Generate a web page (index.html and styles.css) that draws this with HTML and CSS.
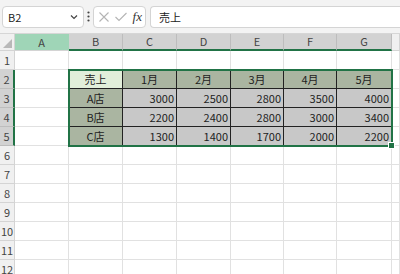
FILE: index.html
```html
<!DOCTYPE html>
<html lang="ja">
<head>
    <meta charset="UTF-8">
    <title>Sheet</title>
    <link rel="stylesheet" href="styles.css">
</head>
<body>
    <div class="toolbar">
        <div class="namebox">
            <span>B2</span>
            <svg width="10" height="10" viewBox="0 0 10 10"><path d="M2 3.5 L5 6.5 L8 3.5" fill="none" stroke="#444" stroke-width="1.2"/></svg>
        </div>
        <div class="dots">
            <svg width="3" height="11" viewBox="0 0 3 11"><circle cx="1.5" cy="1.5" r="1.1" fill="#444"/><circle cx="1.5" cy="5.5" r="1.1" fill="#444"/><circle cx="1.5" cy="9.5" r="1.1" fill="#444"/></svg>
        </div>
        <div class="fxbox">
            <svg width="12" height="12" viewBox="0 0 12 12"><path d="M1.5 1.5 L10.5 10.5 M10.5 1.5 L1.5 10.5" stroke="#b4b4b4" stroke-width="1.1"/></svg>
            <svg width="14" height="12" viewBox="0 0 14 12"><path d="M1.5 6 L5 9.5 L12.5 2" fill="none" stroke="#b4b4b4" stroke-width="1.1"/></svg>
            <span class="fx">fx</span>
        </div>
        <div class="formula">売上</div>
    </div>

    <div class="sheet">
        <div class="corner"><span class="tri"></span></div>
        <div class="colhead hover">A</div>
        <div class="colhead sel">B</div>
        <div class="colhead sel">C</div>
        <div class="colhead sel">D</div>
        <div class="colhead sel">E</div>
        <div class="colhead sel">F</div>
        <div class="colhead sel">G</div>
        <div class="colhead"></div>

        <div class="rowhead">1</div>
        <div class="cell"></div><div class="cell"></div><div class="cell"></div><div class="cell"></div><div class="cell"></div><div class="cell"></div><div class="cell"></div><div class="cell"></div>

        <div class="rowhead sel">2</div>
        <div class="cell"></div>
        <div class="cell title">売上</div>
        <div class="cell head">1月</div>
        <div class="cell head">2月</div>
        <div class="cell head">3月</div>
        <div class="cell head">4月</div>
        <div class="cell head">5月</div>
        <div class="cell"></div>

        <div class="rowhead sel">3</div>
        <div class="cell"></div>
        <div class="cell head">A店</div>
        <div class="cell num">3000</div>
        <div class="cell num">2500</div>
        <div class="cell num">2800</div>
        <div class="cell num">3500</div>
        <div class="cell num">4000</div>
        <div class="cell"></div>

        <div class="rowhead sel">4</div>
        <div class="cell"></div>
        <div class="cell head">B店</div>
        <div class="cell num">2200</div>
        <div class="cell num">2400</div>
        <div class="cell num">2800</div>
        <div class="cell num">3000</div>
        <div class="cell num">3400</div>
        <div class="cell"></div>

        <div class="rowhead sel">5</div>
        <div class="cell"></div>
        <div class="cell head">C店</div>
        <div class="cell num">1300</div>
        <div class="cell num">1400</div>
        <div class="cell num">1700</div>
        <div class="cell num">2000</div>
        <div class="cell num">2200</div>
        <div class="cell"></div>

        <div class="rowhead">6</div>
        <div class="cell"></div><div class="cell"></div><div class="cell"></div><div class="cell"></div><div class="cell"></div><div class="cell"></div><div class="cell"></div><div class="cell"></div>
        <div class="rowhead">7</div>
        <div class="cell"></div><div class="cell"></div><div class="cell"></div><div class="cell"></div><div class="cell"></div><div class="cell"></div><div class="cell"></div><div class="cell"></div>
        <div class="rowhead">8</div>
        <div class="cell"></div><div class="cell"></div><div class="cell"></div><div class="cell"></div><div class="cell"></div><div class="cell"></div><div class="cell"></div><div class="cell"></div>
        <div class="rowhead">9</div>
        <div class="cell"></div><div class="cell"></div><div class="cell"></div><div class="cell"></div><div class="cell"></div><div class="cell"></div><div class="cell"></div><div class="cell"></div>
        <div class="rowhead">10</div>
        <div class="cell"></div><div class="cell"></div><div class="cell"></div><div class="cell"></div><div class="cell"></div><div class="cell"></div><div class="cell"></div><div class="cell"></div>
        <div class="rowhead">11</div>
        <div class="cell"></div><div class="cell"></div><div class="cell"></div><div class="cell"></div><div class="cell"></div><div class="cell"></div><div class="cell"></div><div class="cell"></div>
        <div class="rowhead">12</div>
        <div class="cell"></div><div class="cell"></div><div class="cell"></div><div class="cell"></div><div class="cell"></div><div class="cell"></div><div class="cell"></div><div class="cell"></div>

        <div class="selection"><span class="handle"></span></div>
    </div>
</body>
</html>
```

FILE: styles.css
```css
body {
    margin: 0;
    padding: 0;
    width: 400px;
    height: 274px;
    overflow: hidden;
    background-color: #fff;
    font-family: "Noto Sans CJK JP", "Noto Sans", sans-serif;
    font-size: 11px;
    color: #222;
}
.toolbar {
    height: 34px;
    display: flex;
    align-items: center;
    padding-left: 2px;
    background-color: #f3f3f3;
    box-sizing: border-box;
    border-bottom: 1px solid #d6d6d6;
}
.namebox {
    width: 82px;
    height: 22px;
    box-sizing: border-box;
    border: 1px solid #d4d4d4;
    border-radius: 4px;
    background-color: #fff;
    display: flex;
    align-items: center;
    justify-content: space-between;
    padding: 0 4px 0 5px;
    font-size: 11px;
}
.dots {
    width: 8px;
    margin-right: 1px;
    display: flex;
    justify-content: center;
    align-items: center;
}
.fxbox {
    width: 53px;
    height: 22px;
    box-sizing: border-box;
    border: 1px solid #d4d4d4;
    border-radius: 4px;
    background-color: #fff;
    display: flex;
    align-items: center;
    justify-content: space-between;
    padding: 0 3px 0 4px;
}
.fx {
    font-family: "Liberation Serif", serif;
    font-style: italic;
    font-size: 13px;
    color: #333;
}
.formula {
    flex: 1;
    height: 22px;
    box-sizing: border-box;
    margin-left: 4px;
    border: 1px solid #d4d4d4;
    border-right: none;
    border-radius: 4px 0 0 4px;
    background-color: #fff;
    display: flex;
    align-items: center;
    padding-left: 8px;
}
.sheet {
    position: relative;
    display: grid;
    grid-template-columns: 15px 54px 54px 54px 54px 53px 53px 55px 8px;
    grid-template-rows: 17px repeat(12, 19px);
}
.corner {
    background-color: #f0f0f0;
    border-right: 1px solid #d4d4d4;
    border-bottom: 1px solid #d4d4d4;
    position: relative;
}
.tri {
    position: absolute;
    right: 2px;
    bottom: 2px;
    width: 0;
    height: 0;
    border-left: 9px solid transparent;
    border-bottom: 9px solid #b8b8b8;
}
.colhead {
    box-sizing: border-box;
    background-color: #f0f0f0;
    border-right: 1px solid #d4d4d4;
    border-bottom: 1px solid #d4d4d4;
    text-align: center;
    line-height: 16px;
    color: #444;
}
.colhead.hover {
    background-color: #9fd5b7;
    border-right-color: #9fd5b7;
}
.colhead.sel {
    background-color: #d2d2d2;
    border-right-color: #bdbdbd;
    border-bottom: 2px solid #217346;
    line-height: 15px;
}
.rowhead {
    box-sizing: border-box;
    background-color: #f0f0f0;
    border-right: 1px solid #d4d4d4;
    border-bottom: 1px solid #d4d4d4;
    text-align: center;
    line-height: 18px;
    font-size: 11px;
    color: #444;
}
.rowhead.sel {
    background-color: #d2d2d2;
    border-right: 2px solid #217346;
    border-bottom-color: #bdbdbd;
}
.cell {
    box-sizing: border-box;
    border-right: 1px solid #e1e1e1;
    border-bottom: 1px solid #e1e1e1;
    line-height: 18px;
    white-space: nowrap;
    overflow: hidden;
}
.cell.title {
    background-color: #e2efda;
    border-right-color: #222;
    border-bottom-color: #222;
    text-align: center;
}
.cell.head {
    background-color: #aab5a1;
    border-right-color: #222;
    border-bottom-color: #222;
    text-align: center;
}
.cell.num {
    background-color: #c8c8c8;
    border-right-color: #222;
    border-bottom-color: #222;
    text-align: right;
    padding-right: 2px;
}
.selection {
    position: absolute;
    left: 68px;
    top: 35px;
    width: 325px;
    height: 78px;
    box-sizing: border-box;
    border: 2px solid #217346;
}
.handle {
    position: absolute;
    right: -4px;
    bottom: -4px;
    width: 5px;
    height: 5px;
    background-color: #217346;
    border: 1px solid #fff;
}
```
